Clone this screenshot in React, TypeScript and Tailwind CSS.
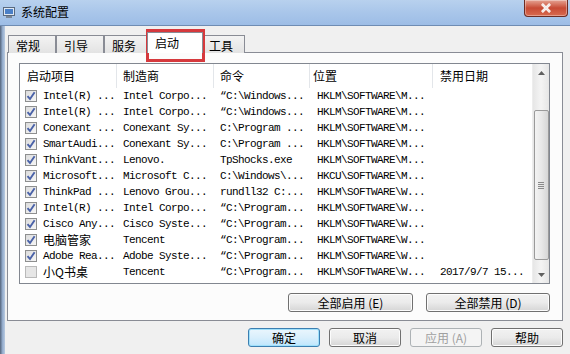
import React from "react";

type Row = { c: boolean; a: string; b: string; d: string; e: string; f?: string };

const rows: Row[] = [
  { c: true, a: "Intel(R) ...", b: "Intel Corpo...", d: "\u201CC:\\Windows...", e: "HKLM\\SOFTWARE\\M..." },
  { c: true, a: "Intel(R) ...", b: "Intel Corpo...", d: "\u201CC:\\Windows...", e: "HKLM\\SOFTWARE\\M..." },
  { c: true, a: "Conexant ...", b: "Conexant Sy...", d: "C:\\Program ...", e: "HKLM\\SOFTWARE\\M..." },
  { c: true, a: "SmartAudi...", b: "Conexant Sy...", d: "C:\\Program ...", e: "HKLM\\SOFTWARE\\M..." },
  { c: true, a: "ThinkVant...", b: "Lenovo.", d: "TpShocks.exe", e: "HKLM\\SOFTWARE\\M..." },
  { c: true, a: "Microsoft...", b: "Microsoft C...", d: "C:\\Windows\\...", e: "HKCU\\SOFTWARE\\M..." },
  { c: true, a: "ThinkPad ...", b: "Lenovo Grou...", d: "rundll32 C:...", e: "HKLM\\SOFTWARE\\W..." },
  { c: true, a: "Intel(R) ...", b: "Intel Corpo...", d: "\u201CC:\\Program...", e: "HKLM\\SOFTWARE\\W..." },
  { c: true, a: "Cisco Any...", b: "Cisco Syste...", d: "\u201CC:\\Program...", e: "HKLM\\SOFTWARE\\W..." },
  { c: true, a: "电脑管家", b: "Tencent", d: "\u201CC:\\Program...", e: "HKLM\\SOFTWARE\\W..." },
  { c: true, a: "Adobe Rea...", b: "Adobe Syste...", d: "\u201CC:\\Program...", e: "HKLM\\SOFTWARE\\W..." },
  { c: false, a: "小Q书桌", b: "Tencent", d: "\u201CC:\\Program...", e: "HKLM\\SOFTWARE\\W...", f: "2017/9/7 15..." },
];

const mono = "font-['Liberation_Mono','Noto_Sans_CJK_SC',monospace] text-[11px] tracking-[-0.6px]";
const cjk = "font-['Noto_Sans_CJK_SC',sans-serif]";

function Check({ on }: { on: boolean }) {
  return (
    <div
      className={`w-[12px] h-[12px] border flex items-center justify-center ${
        on ? "border-[#8e8f8f] bg-gradient-to-br from-[#dcdcdc] to-[#f6f6f6]" : "border-[#b9b9b9] bg-[#e6e6e6]"
      }`}
    >
      {on && (
        <svg width="10" height="10" viewBox="0 0 10 10">
          <path d="M1.5 5.2 L4 8 L8.6 1.2" fill="none" stroke="#4a62a8" strokeWidth="1.9" />
        </svg>
      )}
    </div>
  );
}

function Btn({ children, w, primary, disabled }: { children: React.ReactNode; w: string; primary?: boolean; disabled?: boolean }) {
  return (
    <div
      className={`${w} h-[19px] rounded-[3px] border flex items-center justify-center text-[12px] leading-none ${cjk} ${
        primary
          ? "border-[#3c7fb1] bg-gradient-to-b from-[#eaf6fd] via-[#d9effc] to-[#bee6fd] shadow-[inset_0_0_0_1px_#9fe0fb]"
          : disabled
          ? "border-[#adb2b5] bg-[#f4f4f4] text-[#a0a0a0]"
          : "border-[#707070] bg-gradient-to-b from-[#f2f2f2] via-[#ebebeb] to-[#d5d5d5] shadow-[inset_0_0_0_1px_#fcfcfc]"
      } text-black`}
      style={disabled ? { color: "#a0a0a0" } : undefined}
    >
      {children}
    </div>
  );
}

function Tab({ label, w, sel }: { label: string; w: string; sel?: boolean }) {
  return (
    <div
      className={`${w} ${
        sel
          ? "h-[21px] bg-white border-[#898c95] border-b-white z-10 -mx-[2px]"
          : "h-[18px] bg-gradient-to-b from-[#f3f3f3] to-[#e3e3e3] border-[#898c95]"
      } border border-b-0 flex items-start pl-[7px] pt-[1px] text-[12px] ${cjk} text-black relative`}
    >
      {label}
    </div>
  );
}

export default function App() {
  return (
    <div className="w-[570px] h-[354px] overflow-hidden bg-[#f0f0f0] flex flex-col relative">
      {/* title bar */}
      <div className="h-[26px] shrink-0 bg-gradient-to-b from-[#b8d1ee] via-[#a9c6ea] to-[#9dbde6] border-b border-[#6f8cb3] flex items-start relative">
        <div className="flex items-center pl-[3px] pt-[6px] gap-[6px]">
          <svg width="12" height="11" viewBox="0 0 12 11">
            <rect x="0.5" y="0.5" width="11" height="8" fill="#dfe8f3" stroke="#5a6a80" />
            <rect x="2" y="2" width="8" height="5" fill="#4a7fc7" />
            <rect x="3" y="9" width="6" height="2" fill="#7a8696" />
          </svg>
          <span className={`${cjk} text-[12px] text-black leading-none`}>系统配置</span>
        </div>
        <div className="ml-auto mr-[2px] w-[44px] h-[17px] rounded-b-[4px] border border-t-0 border-[#6c2b22] bg-gradient-to-b from-[#e4a393] via-[#c74a34] to-[#d86a4f] flex items-center justify-center shadow-[inset_0_0_0_1px_rgba(255,255,255,0.35)]">
          <svg width="12" height="10" viewBox="0 0 12 10">
            <path d="M2 1 L10 9 M10 1 L2 9" stroke="#ffffff" strokeWidth="2.6" />
            <path d="M2 1 L10 9 M10 1 L2 9" stroke="#f3e8e6" strokeWidth="1.6" />
          </svg>
        </div>
      </div>

      {/* body */}
      <div className="flex-1 flex">
        <div className="w-[5px] bg-gradient-to-r from-[#55657c] via-[#93abcb] to-[#b9cbe2]" />
        <div className="flex-1 pl-[2px] pr-[7px] flex flex-col">
          {/* tabs */}
          <div className="flex items-end pt-[6px] h-[27px] -mb-[1px] pl-[1px]">
            <Tab label="常规" w="w-[48px]" />
            <Tab label="引导" w="w-[48px]" />
            <Tab label="服务" w="w-[45px]" />
            <Tab label="启动" w="w-[56px]" sel />
            <Tab label="工具" w="w-[44px]" />
          </div>
          {/* panel */}
          <div className="h-[269px] bg-[#fcfcfc] border border-[#898c95] pl-[11px] pr-[12px] pt-[10px] flex flex-col">
            <div className="h-[221px] border border-[#828790] bg-white flex">
              <div className="flex-1 flex flex-col">
                {/* header */}
                <div className={`h-[24px] flex ${cjk} text-[12px] text-black`}>
                  <div className="w-[97px] border-r border-[#e3e6ea] pl-[7px] flex items-center">启动项目</div>
                  <div className="w-[97px] border-r border-[#e3e6ea] pl-[6px] flex items-center">制造商</div>
                  <div className="w-[96px] border-r border-[#e3e6ea] pl-[6px] flex items-center">命令</div>
                  <div className="w-[123px] border-r border-[#e3e6ea] pl-[3px] flex items-center">位置</div>
                  <div className="flex-1 pl-[7px] flex items-center">禁用日期</div>
                </div>
                {rows.map((r, i) => (
                  <div key={i} className="h-[16px] flex items-center text-black">
                    <div className="w-[97px] flex items-center pl-[5px] gap-[6px]">
                      <Check on={r.c} />
                      <span className={`whitespace-pre ${/[\u4e00-\u9fff]/.test(r.a) ? `${cjk} text-[12px]` : mono}`}>{r.a}</span>
                    </div>
                    <div className={`w-[97px] pl-[6px] whitespace-pre ${mono}`}>{r.b}</div>
                    <div className={`w-[96px] pl-[6px] whitespace-pre ${mono}`}>{r.d}</div>
                    <div className={`w-[123px] pl-[7px] whitespace-pre ${mono}`}>{r.e}</div>
                    <div className={`flex-1 pl-[7px] whitespace-pre ${mono}`}>{r.f ?? ""}</div>
                  </div>
                ))}
              </div>
              {/* scrollbar */}
              <div className="w-[17px] bg-gradient-to-r from-[#e6e6e6] via-[#f4f4f4] to-[#e6e6e6] border-l border-[#ededed] flex flex-col items-center">
                <div className="h-[17px] w-full flex items-center justify-center">
                  <svg width="7" height="4" viewBox="0 0 7 4"><path d="M0 4 L3.5 0 L7 4 Z" fill="#606060" /></svg>
                </div>
                <div className="h-[29px]" />
                <div className="w-[15px] h-[150px] rounded-[2px] border border-[#9a9a9a] bg-gradient-to-r from-[#f3f3f3] via-[#e8e8e8] to-[#d6d6d6] flex items-center justify-center">
                  <div className="flex flex-col gap-[1px]">
                    <div className="w-[6px] h-[1px] bg-[#8a8a8a]" />
                    <div className="w-[6px] h-[1px] bg-[#8a8a8a]" />
                    <div className="w-[6px] h-[1px] bg-[#8a8a8a]" />
                    <div className="w-[6px] h-[1px] bg-[#8a8a8a]" />
                  </div>
                </div>
                <div className="flex-1" />
                <div className="h-[17px] w-full flex items-center justify-center">
                  <svg width="7" height="4" viewBox="0 0 7 4"><path d="M0 0 L3.5 4 L7 0 Z" fill="#606060" /></svg>
                </div>
              </div>
            </div>
            <div className="flex justify-end gap-[13px] mt-[9px]">
              <Btn w="w-[125px]">全部启用 (E)</Btn>
              <Btn w="w-[124px]">全部禁用 (D)</Btn>
            </div>
          </div>
          {/* bottom buttons */}
          <div className="flex justify-end gap-[9px] mt-[7px]">
            <Btn w="w-[72px]" primary>确定</Btn>
            <Btn w="w-[72px]">取消</Btn>
            <Btn w="w-[72px]" disabled>应用 (A)</Btn>
            <Btn w="w-[72px]">帮助</Btn>
          </div>
        </div>
      </div>

      {/* red annotation box */}
      <div className="absolute left-[146px] top-[29px] w-[59px] h-[33px] border-[3px] border-[#d6393d] pointer-events-none" />
    </div>
  );
}
